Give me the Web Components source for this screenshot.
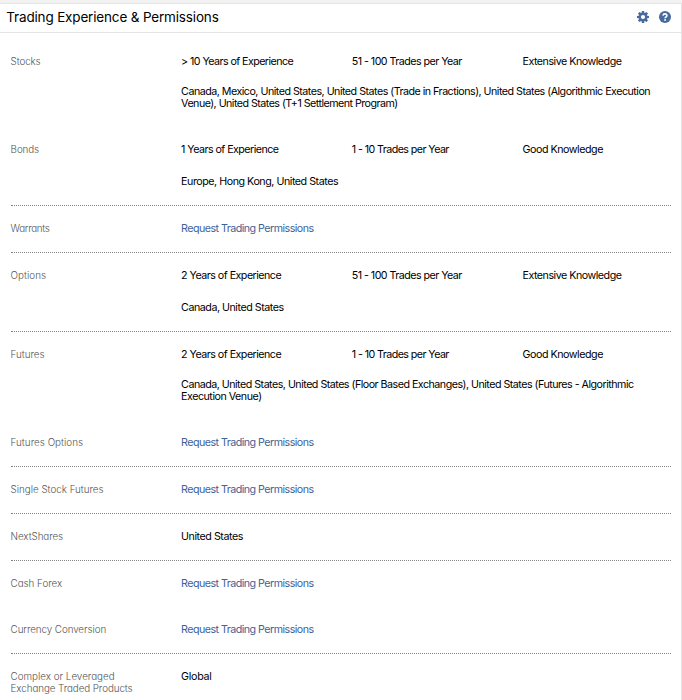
<!DOCTYPE html>
<html lang="en">
<head>
<meta charset="utf-8">
<title>Trading Experience &amp; Permissions</title>
<style>
html,body{margin:0;background:#f2f2f2;font-family:Inter,"Liberation Sans",sans-serif;color:#000}
body{height:700px;overflow:hidden}
</style>
</head>
<body>
<permissions-panel></permissions-panel>
<script>
/* One line of text whose tracking is adjusted to the width in its "w" attribute. */
customElements.define('fit-text', class extends HTMLElement {
  connectedCallback() {
    this.attachShadow({mode: 'open'}).innerHTML =
      '<style>:host{display:block;white-space:pre;width:max-content}span{display:inline-block}</style><span><slot></slot></span>';
    const span = this.shadowRoot.querySelector('span');
    const natural = span.getBoundingClientRect().width;
    const n = this.textContent.length;
    span.style.letterSpacing = ((+this.getAttribute('w') - natural) / n) + 'px';
  }
});

customElements.define('gear-icon', class extends HTMLElement {
  connectedCallback() {
    let teeth = '';
    for (let a = 0; a < 360; a += 45) teeth += `<path d="M4.9 0h2.2l.5 2.8H4.4z" transform="rotate(${a} 6 6)"/>`;
    this.attachShadow({mode: 'open'}).innerHTML =
      `<style>:host{display:block;width:12px;height:12px}svg{display:block;overflow:visible}</style>
       <svg width="12" height="12" viewBox="0 0 12 12" fill="#476a9f">${teeth}<circle cx="6" cy="6" r="3.2" fill="none" stroke="#476a9f" stroke-width="2.2"/></svg>`;
  }
});

customElements.define('help-icon', class extends HTMLElement {
  connectedCallback() {
    this.attachShadow({mode: 'open'}).innerHTML =
      `<style>:host{display:block;width:12px;height:12px}svg{display:block}</style>
       <svg width="12" height="12" viewBox="0 0 12 12"><circle cx="6" cy="6" r="6" fill="#476a9f"/>
       <path d="M4 4.6C4.2 2.3 8 2.4 7.9 4.6C7.8 5.8 6.1 5.8 6.1 7.3" fill="none" stroke="#fff" stroke-width="1.6"/>
       <rect x="5.2" y="8.2" width="1.7" height="1.6" fill="#fff"/></svg>`;
  }
});

customElements.define('panel-header', class extends HTMLElement {
  connectedCallback() {
    this.attachShadow({mode: 'open'}).innerHTML =
      `<style>:host{display:flex;align-items:center;justify-content:space-between;box-sizing:border-box;height:29px;padding:0 10px 2px 6.3px;border-bottom:1px solid #e4e4e4;font-size:13.5px;line-height:20px}
       .tools{display:flex;gap:10px}</style>
       <slot></slot><div class="tools"><gear-icon></gear-icon><help-icon></help-icon></div>`;
  }
});

customElements.define('permission-row', class extends HTMLElement {
  connectedCallback() {
    this.attachShadow({mode: 'open'}).innerHTML =
      `<style>:host{display:grid;grid-template-columns:170.5px 1fr;box-sizing:border-box;padding:17px 0 17px;font-size:10.7px;line-height:12px}
       :host([divider]){border-bottom:1px dotted #848484}
       .name{color:#555;font-size:9.8px;font-weight:300;font-feature-settings:"cv11","ss03"}
       .stats{display:grid;grid-template-columns:repeat(3,170.7px)}
       .regions{padding-top:18px}
       :host([single]) .regions{padding:20px 0 0}
       :host([plain]) .regions{display:none}
       ::slotted(.link){color:#3f6297}</style>
       <div class="name"><slot name="name"></slot></div>
       <div><div class="stats"><slot name="stat"></slot></div><div class="regions"><slot name="region"></slot></div></div>`;
  }
});

const LINK = [['Request Trading Permissions', 132.5, 'link']];
const ROWS = [
  {name: [['Stocks', 30]], stats: [['> 10 Years of Experience', 112], ['51 - 100 Trades per Year', 110], ['Extensive Knowledge', 99]],
   regions: [['Canada, Mexico, United States, United States (Trade in Fractions), United States (Algorithmic Execution', 469], ['Venue), United States (T+1 Settlement Program)', 216.5]]},
  {name: [['Bonds', 28.5]], stats: [['1 Years of Experience', 97.3], ['1 - 10 Trades per Year', 97], ['Good Knowledge', 80.5]],
   regions: [['Europe, Hong Kong, United States', 157]], line: 1},
  {name: [['Warrants', 39]], stats: LINK, line: 1},
  {name: [['Options', 35.5]], stats: [['2 Years of Experience', 100], ['51 - 100 Trades per Year', 110], ['Extensive Knowledge', 99]],
   regions: [['Canada, United States', 102.5]], line: 1},
  {name: [['Futures', 34]], stats: [['2 Years of Experience', 100], ['1 - 10 Trades per Year', 97], ['Good Knowledge', 80.5]],
   regions: [['Canada, United States, United States (Floor Based Exchanges), United States (Futures - Algorithmic', 452.5], ['Execution Venue)', 80.5]]},
  {name: [['Futures Options', 72.5]], stats: LINK, line: 1},
  {name: [['Single Stock Futures', 93]], stats: LINK, line: 1},
  {name: [['NextShares', 52.5]], stats: [['United States', 61.8]], line: 1},
  {name: [['Cash Forex', 51.5]], stats: LINK},
  {name: [['Currency Conversion', 95.5]], stats: LINK, line: 1},
  {name: [['Complex or Leveraged', 104], ['Exchange Traded Products', 122]], stats: [['Global', 30.5]]}
];

customElements.define('permissions-panel', class extends HTMLElement {
  connectedCallback() {
    const esc = s => s.replace(/&/g, '&amp;').replace(/>/g, '&gt;');
    const texts = (list, slot) => (list || []).map(([t, w, c]) =>
      `<fit-text slot="${slot}" w="${w}"${c ? ` class="${c}"` : ''}>${esc(t)}</fit-text>`).join('');
    const rows = ROWS.map(r => {
      const kind = !r.regions ? 'plain' : r.regions.length === 1 ? 'single' : '';
      return `<permission-row ${kind} ${r.line ? 'divider' : ''}>${texts(r.name, 'name')}${texts(r.stats, 'stat')}${texts(r.regions, 'region')}</permission-row>`;
    }).join('');
    this.attachShadow({mode: 'open'}).innerHTML =
      `<style>:host{display:block;box-sizing:border-box;height:700px;overflow:hidden;padding-top:3px}
       section{background:#fff;border:1px solid #e4e4e4;border-width:1px 1px 0 0;min-height:696px}
       .rows{padding:6px 10px 0 10.6px}</style>
       <section><panel-header><fit-text w="212.3">Trading Experience &amp; Permissions</fit-text></panel-header>
       <div class="rows">${rows}</div></section>`;
  }
});
</script>
</body>
</html>
